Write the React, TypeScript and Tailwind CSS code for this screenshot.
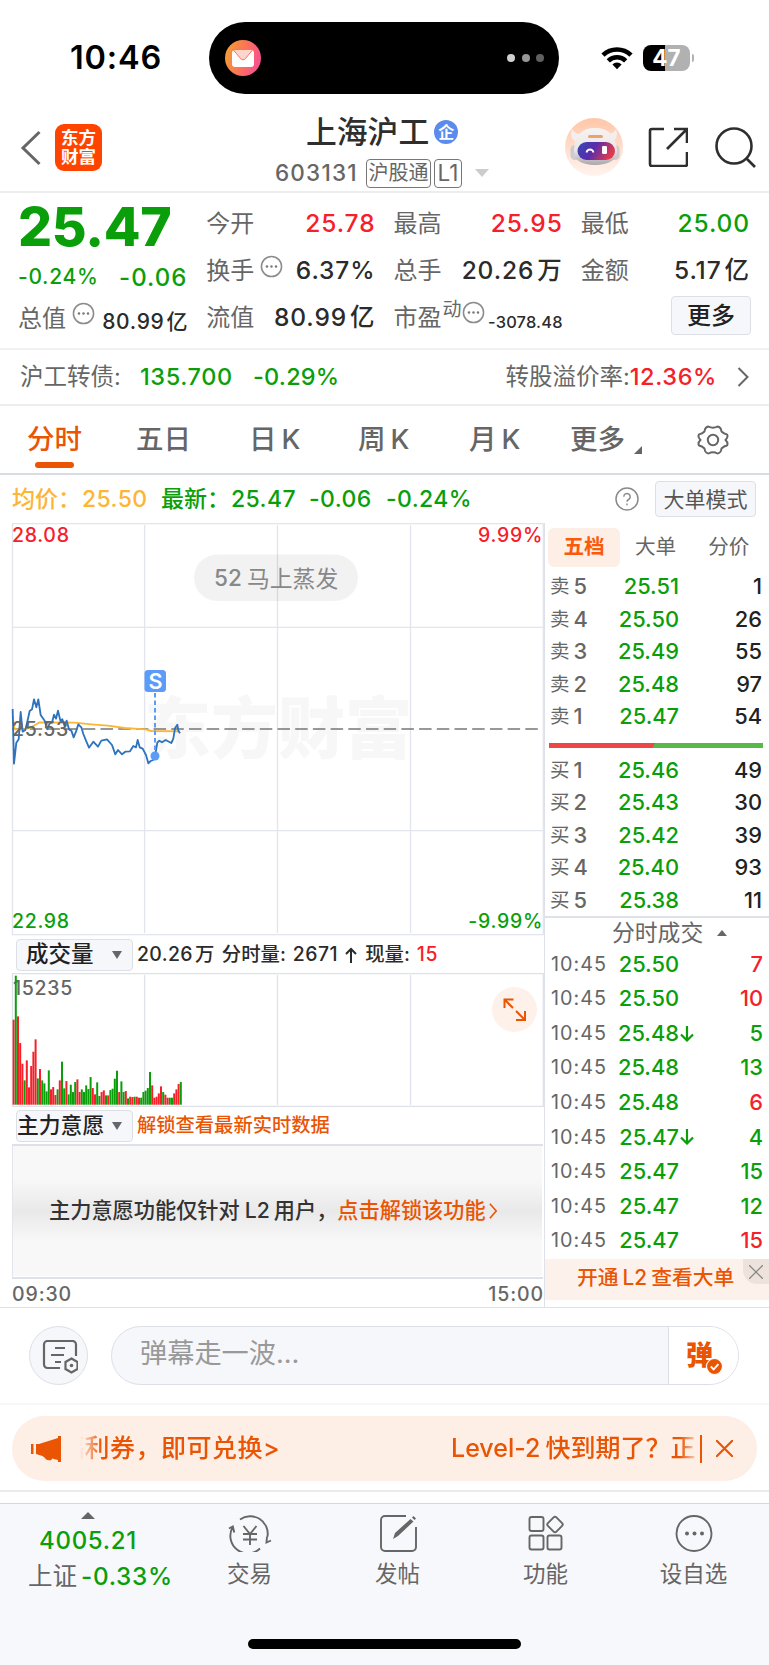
import type { ReactNode } from "react";
import clsx from "clsx";

const GREEN = "text-[#0a9f0a]";
const RED = "text-[#f5202a]";

const More = ({ className }: { className?: string }) => (
  <svg viewBox="0 0 24 24" className={clsx("size-[23px] shrink-0", className)} fill="none" stroke="#8c8c8c" strokeWidth="1.6">
    <circle cx="12" cy="12" r="10.5" />
    <g fill="#777" stroke="none">
      <circle cx="7.3" cy="12" r="1.3" />
      <circle cx="12" cy="12" r="1.3" />
      <circle cx="16.7" cy="12" r="1.3" />
    </g>
  </svg>
);

const StatusBar = () => (
  <div className="flex h-[100px] items-start pt-[22px] text-black">
    <div className="flex h-[72px] w-[209px] items-center pl-[70px] text-[32.500px] font-semibold tracking-[0.8px]">10:46</div>
    <div className="flex h-[72px] w-[350px] items-center justify-between rounded-full bg-black pl-[16px] pr-[15px]">
      <svg viewBox="0 0 36 36" className="size-[36px]">
        <defs>
          <linearGradient id="mail" x1="0" x2="1" y1="0" y2="0.3">
            <stop offset="0" stopColor="#f0a52e" />
            <stop offset="0.5" stopColor="#fb7a50" />
            <stop offset="1" stopColor="#f8548a" />
          </linearGradient>
        </defs>
        <circle cx="18" cy="18" r="18" fill="url(#mail)" />
        <rect x="7" y="10" width="22" height="17" rx="3" fill="#fff" />
        <path d="M8 9.500h20l-7.700 9.200a3 3 0 0 1-4.600 0z" fill="#fdd5cc" stroke="#f9765b" strokeWidth="1" />
      </svg>
      <div className="flex gap-[6.500px]">
        <span className="size-[8px] rounded-full bg-[#cfcfcf]" />
        <span className="size-[8px] rounded-full bg-[#979797]" />
        <span className="size-[8px] rounded-full bg-[#606060]" />
      </div>
    </div>
    <div className="flex h-[72px] items-center pl-[42px]">
      <svg viewBox="0 0 32 24" className="h-[24px] w-[32px]" fill="none" stroke="#000" strokeWidth="4.600">
        <path d="M2 9.200a20 20 0 0 1 28 0" />
        <path d="M7.300 14.800a12.600 12.600 0 0 1 17.400 0" />
        <path d="M16 23.200l-4.600-4.800a6.600 6.600 0 0 1 9.200 0z" fill="#000" stroke="none" />
      </svg>
      <div className="ml-[10px] flex h-[26px] w-[47px] items-center justify-center rounded-[8px] bg-linear-to-r from-black from-46% to-[#b1b1b1] to-46% text-[22.500px] font-bold text-white">
        47
      </div>
      <div className="ml-[2px] h-[8px] w-[2px] rounded-r-full bg-[#b1b1b1]" />
    </div>
  </div>
);

const Robot = () => (
  <svg viewBox="0 0 58 58" className="size-[58px]">
    <defs>
      <linearGradient id="halo" x1="0" x2="0" y1="0" y2="1">
        <stop offset="0" stopColor="#ffc6a8" />
        <stop offset="1" stopColor="#fff4ef" />
      </linearGradient>
      <linearGradient id="visor" x1="0" x2="1" y1="0" y2="0.3">
        <stop offset="0" stopColor="#3548b8" />
        <stop offset="0.5" stopColor="#5a2cab" />
        <stop offset="1" stopColor="#e03a50" />
      </linearGradient>
      <linearGradient id="shell" x1="0" x2="0" y1="0" y2="1">
        <stop offset="0" stopColor="#f7f3f2" />
        <stop offset="0.6" stopColor="#ebe7e8" />
        <stop offset="1" stopColor="#aaa5ab" />
      </linearGradient>
    </defs>
    <circle cx="29" cy="29" r="29" fill="url(#halo)" />
    <path d="M7 11c-3 8 1 13 7 13l6-9c-7 2-11 0-13-4zM51 11c3 8-1 13-7 13l-6-9c7 2 11 0 13-4z" fill="#f5eeec" />
    <rect x="5.500" y="27" width="9" height="15" rx="4.500" fill="#cfcace" />
    <rect x="45.500" y="27" width="9" height="15" rx="4.500" fill="#cfcace" />
    <path d="M9 34c0-17 8-24 21-24s21 7 22 24c0 8-9 13-22 13S9 42 9 34z" fill="url(#shell)" />
    <rect x="23" y="17" width="15" height="3" rx="1.500" fill="#e9a46d" />
    <rect x="12.500" y="24" width="37.500" height="18" rx="9" fill="url(#visor)" />
    <path d="M21.500 34.500c1-4 6-4 7 0" fill="none" stroke="#fff" strokeWidth="1.800" />
    <rect x="37" y="28" width="5" height="8" rx="1.200" fill="#fff" />
  </svg>
);

const Header = () => (
  <div className="flex h-[93px] items-center border-b-2 border-[#ededed] pl-[20px]">
    <svg viewBox="0 0 22 36" className="mt-[4px] h-[36px] w-[22px]" fill="none" stroke="#666" strokeWidth="3">
      <path d="M19.500 2L3 18l16.500 16" />
    </svg>
    <div className="ml-[13px] mt-[3px] flex size-[47px] flex-col items-center justify-center rounded-[9px] bg-[#ff4400] text-[17.500px] font-bold leading-[19.500px] text-white">
      <span>东方</span>
      <span>财富</span>
    </div>
    <div className="ml-[173px] w-[216px] pt-[13px]">
      <div className="flex h-[36px] items-center pl-[31px] text-[30.800px] font-medium text-[#2e2e2e]">
        上海沪工
        <span className="ml-[5px] flex size-[24px] items-center justify-center rounded-full bg-[#5b8bec] text-[16px] font-bold text-white">企</span>
      </div>
      <div className="mt-[6px] flex h-[34px] items-center text-[22.500px] text-[#666]">
        <span className="w-[91px] font-medium tracking-[1.200px]">603131</span>
        <span className="flex h-[29px] w-[65px] items-center justify-center rounded-[4px] border-[1.500px] border-[#777] text-[20px]">沪股通</span>
        <span className="ml-[3px] flex h-[29px] w-[28px] items-center justify-center rounded-[4px] border-[1.500px] border-[#777]">L1</span>
        <svg viewBox="0 0 14 8" className="ml-[13px] h-[8px] w-[14px]" fill="#ccc">
          <path d="M0 0h14l-7 8z" />
        </svg>
      </div>
    </div>
    <div className="ml-[74px] mt-[3px]">
      <Robot />
    </div>
    <svg viewBox="0 0 40 40" className="ml-[25px] mt-[2px] size-[40px]" fill="none" stroke="#2e2e2e" strokeWidth="2.600">
      <path d="M16 2H4a2 2 0 0 0-2 2v33a2 2 0 0 0 2 2h33a2 2 0 0 0 2-2V25M26 2h13v14M38.500 2.500L19 22" />
    </svg>
    <svg viewBox="0 0 42 42" className="ml-[27px] mt-[2px] size-[42px]" fill="none" stroke="#2e2e2e" strokeWidth="2.600">
      <circle cx="19" cy="20" r="17.500" />
      <path d="M31 32l9 9" />
    </svg>
  </div>
);

type StatProps = { label: string; value: string; unit?: string; color?: string; more?: boolean };

const Stat = ({ label, value, unit, color = "text-[#2b2b2b]", more }: StatProps) => (
  <div className="flex h-[47px] items-center text-[24px]">
    <span className="text-[#666]">{label}</span>
    {more && <More className="mb-[9px] ml-[6px]" />}
    <span className={clsx("-mr-px ml-auto text-[24.500px] font-medium tracking-[0.900px]", color)}>
      {value}
      {unit && <span className="ml-[3px]">{unit}</span>}
    </span>
  </div>
);

const Quote = () => (
  <div className="grid h-[157px] grid-cols-4 gap-[19px] border-b-2 border-[#f1f1f1] pl-[19px] pr-[20px] pt-[7px]">
    <div>
      <div className={clsx("-ml-px flex h-[54px] items-center text-[53.500px] font-extrabold tracking-[-0.300px]", GREEN)}>25.47</div>
      <div className={clsx("-ml-px flex h-[46px] items-center justify-between font-medium", GREEN)}>
        <span className="mb-[2px] text-[21px] tracking-[0.700px]">-0.24%</span>
        <span className="mt-[2px] text-[24px] tracking-[1px]">-0.06</span>
      </div>
      <div className="flex h-[42px] items-center whitespace-nowrap text-[#2b2b2b]">
        <span className="-ml-px mb-[5px] text-[24px] text-[#666]">总值</span>
        <More className="mb-[16px] ml-[6px]" />
        <span className="-mr-px ml-auto text-[21px] font-medium tracking-[0.700px]">80.99<span className="ml-[2px]">亿</span></span>
      </div>
    </div>
    <div>
      <Stat label="今开" value="25.78" color={RED} />
      <Stat label="换手" value="6.37%" more />
      <Stat label="流值" value="80.99" unit="亿" />
    </div>
    <div>
      <Stat label="最高" value="25.95" color={RED} />
      <Stat label="总手" value="20.26" unit="万" />
      <div className="flex h-[47px] items-center text-[24px] text-[#666]">
        市盈
        <span className="mb-[16px] ml-[1px] text-[19px]">动</span>
        <More className="mb-[10px]" />
        <span className="-mr-px ml-auto mt-[10px] text-[16.400px] font-medium tracking-[0.200px] text-[#2b2b2b]">-3078.48</span>
      </div>
    </div>
    <div>
      <Stat label="最低" value="25.00" color={GREEN} />
      <Stat label="金额" value="5.17" unit="亿" />
      <div className="-mr-[2px] ml-auto mt-[2px] flex h-[39px] w-[80px] items-center justify-center rounded-[4px] border-[1.500px] border-[#dcdfe6] bg-[#f6f7fa] text-[24px] font-medium text-[#222]">
        更多
      </div>
    </div>
  </div>
);

const BondRow = () => (
  <div className="flex h-[56px] items-center border-b-2 border-[#ededed] px-[20px] text-[23.500px] text-[#666]">
    <span className="w-[120px]">沪工转债:</span>
    <span className={clsx("w-[113px] font-medium tracking-[0.600px]", GREEN)}>135.700</span>
    <span className={clsx("font-medium tracking-[0.200px]", GREEN)}>-0.29%</span>
    <span className="ml-auto">转股溢价率:</span>
    <span className={clsx("font-medium tracking-[0.600px]", RED)}>12.36%</span>
    <svg viewBox="0 0 12 20" className="ml-[20px] h-[20px] w-[12px]" fill="none" stroke="#666" strokeWidth="2">
      <path d="M1.500 1L10.500 10l-9 9" />
    </svg>
  </div>
);

const Tabs = () => (
  <div className="flex h-[69px] items-center border-b-2 border-[#d8dde5] text-[27.500px] font-medium text-[#666]">
    <div className="relative ml-[27px] w-[109px] text-[#ea5504]">
      分时
      <span className="absolute left-[8px] top-[36px] h-[6px] w-[39px] rounded-full bg-[#ea5504]" />
    </div>
    <div className="w-[113px]">五日</div>
    <div className="w-[109px]">日<span className="ml-[5px]">K</span></div>
    <div className="w-[111px]">周<span className="ml-[5px]">K</span></div>
    <div className="w-[101px]">月<span className="ml-[5px]">K</span></div>
    <div>更多</div>
    <svg viewBox="0 0 8 8" className="ml-[9px] mt-[20px] size-[8px]" fill="#666">
      <path d="M8 0v8H0z" />
    </svg>
    <svg viewBox="0 0 32 32" className="ml-[55px] size-[32px]" fill="none" stroke="#666" strokeWidth="2" strokeLinejoin="round">
      <path d="M11.500 2.500Q16 5 20.500 2.500Q24 3 24.500 7.500Q27 10 30 10.500Q31.500 13 28.500 16Q31.500 19 30 21.500Q27 22 24.500 24.500Q24 29 20.500 29.500Q16 27 11.500 29.500Q8 29 7.500 24.500Q5 22 2 21.500Q.5 19 3.500 16Q.5 13 2 10.500Q5 10 7.500 7.500Q8 3 11.500 2.500z" />
      <circle cx="16" cy="16" r="5.200" />
    </svg>
  </div>
);

const InfoRow = () => (
  <div className="flex h-[48px] items-center whitespace-nowrap pl-[12px] pr-[13px] text-[23px] font-medium tracking-[0.400px]">
    <span className="w-[70px] tracking-normal text-[#fdb535]">均价：</span>
    <span className="w-[79px] text-[#fdb535]">25.50</span>
    <span className={clsx("w-[70px] tracking-normal", GREEN)}>最新：</span>
    <span className={clsx("w-[78px]", GREEN)}>25.47</span>
    <span className={clsx("w-[77px]", GREEN)}>-0.06</span>
    <span className={GREEN}>-0.24%</span>
    <svg viewBox="0 0 24 24" className="ml-auto size-[24px]" fill="none" stroke="#8a8a8a" strokeWidth="1.500">
      <circle cx="12" cy="12" r="11" />
      <path d="M8.800 9.700a3.200 3.200 0 1 1 4.800 2.800c-1.200.7-1.600 1.200-1.600 2.300M12 16.500v1.700" />
    </svg>
    <span className="ml-[16px] flex h-[36px] w-[101px] items-center justify-center rounded-[4px] border-[1.500px] border-[#dcdfe6] bg-[#f6f7fa] text-[21px] font-normal tracking-normal text-[#555]">
      大单模式
    </span>
  </div>
);

const PRICE =
  "14,57 18,221 25,158 32,148 38,66 44,125 52,120 58,95 65,63 72,58 78,28 85,52 91,28 98,75 110,92 118,118 125,100 132,98 138,74 144,86 150,62 157,92 163,88 170,108 176,92 183,118 190,122 197,142 204,125 211,103 220,112 226,132 234,152 243,173 256,155 270,170 280,152 297,148 312,165 322,193 330,180 342,193 352,185 366,184 376,168 384,172 389,150 395,172 404,176 414,195 421,220 428,213 436,210 441,198 448,158 454,152 462,157 473,150 490,159 496,146 501,115 508,104 511,122 516,130";
const AVERAGE = "14,80 20,118 45,118 70,112 95,97 200,98 250,103 300,107 350,114 412,118 430,123 515,124";

const PriceChart = () => (
  <svg viewBox="0 523 544 413" className="block h-[413px] w-[544px] text-[19.500px] font-medium tracking-[0.700px]">
    <text x="278" y="753" textAnchor="middle" className="fill-[#f7f7f7] text-[67px] font-black tracking-normal">东方财富</text>
    <g stroke="#e2e4ee" strokeWidth="1.300" fill="none">
      <path d="M12.500 523v412M144.600 525v408M277.500 525v408M410.500 525v408M543.300 523v412M12 523.700h531M12 627.300h531M12 830.700h531M12 934.700h531" />
    </g>
    <path d="M12 729h531" stroke="#777" strokeWidth="1.500" strokeDasharray="12.500 5.200" />
    <rect x="194" y="554.500" width="164" height="46.500" rx="23" fill="#000" fillOpacity="0.05" />
    <text x="214" y="586" className="fill-[#888] text-[22.500px] tracking-normal">52</text>
    <text x="247" y="586.500" className="fill-[#888] text-[22.800px] font-normal tracking-normal">马上蒸发</text>
    <g transform="translate(8 690) scale(0.33333)" fill="none" strokeLinejoin="round">
      <polyline points={AVERAGE} stroke="#fdb535" strokeWidth="5.500" />
      <polyline points={PRICE} stroke="#2e73bd" strokeWidth="5.500" />
    </g>
    <text x="12" y="735.500" className="fill-[#666]">25.53</text>
    <path d="M155 693v62" stroke="#5a9cf8" strokeWidth="2" strokeDasharray="4.500 3" />
    <circle cx="155" cy="756" r="4.500" fill="#5a9cf8" />
    <rect x="144.500" y="670" width="21.500" height="22" rx="3.500" fill="#5a9cf8" />
    <text x="155.500" y="688.500" textAnchor="middle" className="fill-white text-[21.500px] font-semibold tracking-normal">S</text>
    <text x="12" y="542" className="fill-[#f5202a]">28.08</text>
    <text x="543" y="542" textAnchor="end" className="fill-[#f5202a]">9.99%</text>
    <text x="12" y="927.700" className="fill-[#0a9f0a]">22.98</text>
    <text x="543" y="927.700" textAnchor="end" className="fill-[#0a9f0a]">-9.99%</text>
  </svg>
);

// one entry per minute: u = up (red), d = down (green), then the height
const VOLUME =
  "u255 d387 u265 u185 u123 d73 u133 u52 u116 u159 u196 d79 u107 d73 d64 d40 d103 u46 u53 u29 d46 u73 d129 d49 u71 d31 d60 d38 d68 u76 u38 d46 d38 d58 d47 d83 u50 u31 d67 d26 u38 u43 d28 u28 d44 d48 d78 d102 u38 d70 d38 u41 d19 u24 u23 d24 u24 u21 d21 d38 d42 d50 d98 u58 u21 u24 u34 u55 d38 u30 u21 d21 d21 u34 u46 u62 d68".split(" ");

const VolumeChart = () => (
  <svg viewBox="0 973 544 134" className="block h-[134px] w-[544px]">
    <path
      d="M12.500 973v134M144.600 975v130M277.500 975v130M410.500 975v130M543.300 973v134M12 973.500h531M12 1106.500h531"
      stroke="#dfe1ea"
      strokeWidth="1.300"
    />
    <text x="13" y="994.700" className="fill-[#666] text-[19.500px] font-medium tracking-[0.700px]">15235</text>
    {VOLUME.map((v, i) => {
      const h = Number(v.slice(1)) / 3;
      return <rect key={i} x={12.6 + i * 2.2} y={1104.7 - h} width="2" height={h} fill={v[0] === "u" ? "#f5202a" : "#0a9f0a"} />;
    })}
    <circle cx="514.500" cy="1009.500" r="22.500" fill="#fdf1ea" />
    <path d="M504.500 1008v-8.500h9M505 1000l8 8M516 1020h9v-9M524.500 1019.500l-8.500-8.500" fill="none" stroke="#ea5504" strokeWidth="2" />
  </svg>
);

const Picker = ({ label, className }: { label: string; className: string }) => (
  <div className={clsx("flex h-[32px] w-[117px] shrink-0 items-center justify-between rounded-[4px] border-[1.500px] border-[#dcdfe6] bg-[#f6f7fa] pr-[10px] text-[#222]", className)}>
    {label}
    <svg viewBox="0 0 10 8" className="h-[8px] w-[10px]" fill="#666">
      <path d="M0 0h10L5 8z" />
    </svg>
  </div>
);

const Charts = () => (
  <div className="w-[544px] shrink-0">
    <PriceChart />
    <div className="flex h-[37px] items-center whitespace-nowrap pl-[16px] text-[19.400px] font-medium text-[#2b2b2b]">
      <Picker label="成交量" className="pl-[9px] text-[22.500px]" />
      <span className="ml-[4px] tracking-[0.400px]">20.26<span className="ml-[2px]">万</span></span>
      <span className="ml-[7px]">分时量:</span>
      <span className="ml-[7px] tracking-[0.500px]">2671</span>
      <svg viewBox="0 0 12 16" className="ml-[7px] h-[16px] w-[12px]" fill="none" stroke="#2b2b2b" strokeWidth="2">
        <path d="M6 16V2M1 7l5-5 5 5" />
      </svg>
      <span className="ml-[8px]">现量:</span>
      <span className={clsx("ml-[7px] tracking-[0.700px]", RED)}>15</span>
    </div>
    <VolumeChart />
    <div className="flex h-[37px] items-center pl-[16px] text-[19.300px] font-medium text-[#ea5504]">
      <Picker label="主力意愿" className="text-[21.800px]" />
      <span className="ml-[4px] mt-[1px]">解锁查看最新实时数据</span>
    </div>
    <div className="ml-[12px] h-[135px] w-[531px] border-y-2 border-l border-b-[#dfe1ea] border-l-[#e2e4ee] border-t-[#dfe1ea]">
      <div className="flex h-[130px] w-[529px] items-center whitespace-nowrap bg-linear-to-b from-[#f8f8f8] from-25% via-[#e9e9e9] via-50% to-[#f8f8f8] to-74% pl-[36px] text-[21.200px] font-medium text-[#333]">
        主力意愿功能仅针对<span className="ml-[5px] mr-[4px]">L2</span>用户，
        <span className="text-[#ea5504]">点击解锁该功能</span>
        <svg viewBox="0 0 10 18" className="ml-[3px] h-[18px] w-[9px]" fill="none" stroke="#ea5504" strokeWidth="1.800">
          <path d="M1 1l7 8-7 8" />
        </svg>
      </div>
    </div>
    <div className="flex h-[28px] items-center justify-between pl-[12px] pt-[3px] text-[19.500px] font-medium tracking-[0.900px] text-[#666]">
      <span>09:30</span>
      <span>15:00</span>
    </div>
  </div>
);

const SELLS = [["5", "25.51", "1"], ["4", "25.50", "26"], ["3", "25.49", "55"], ["2", "25.48", "97"], ["1", "25.47", "54"]];
const BUYS = [["1", "25.46", "49"], ["2", "25.43", "30"], ["3", "25.42", "39"], ["4", "25.40", "93"], ["5", "25.38", "11"]];

const Level = ({ side, row }: { side: string; row: string[] }) => (
  <div className="flex h-[32.500px] items-center pl-[5px] pr-[7px] text-[21.800px] font-medium">
    <span className="flex w-[44px] items-center gap-[4px] text-[#666]">
      <span className="text-[19.500px] font-normal">{side}</span>
      {row[0]}
    </span>
    <span className={clsx("w-[85px] text-right", GREEN)}>{row[1]}</span>
    <span className="ml-auto text-[#222]">{row[2]}</span>
  </div>
);

const TRADES = [
  { price: "25.50", qty: "7", up: true },
  { price: "25.50", qty: "10", up: true },
  { price: "25.48", qty: "5", arrow: true },
  { price: "25.48", qty: "13" },
  { price: "25.48", qty: "6", up: true },
  { price: "25.47", qty: "4", arrow: true },
  { price: "25.47", qty: "15" },
  { price: "25.47", qty: "12" },
  { price: "25.47", qty: "15", up: true },
];

const OrderBook = () => (
  <div className="w-[225px] border-l border-[#dfe1ea]">
    <div className="flex h-[48px] items-center pl-[3px] text-[20.600px] text-[#666]">
      <span className="flex h-[39px] w-[72px] items-center justify-center rounded-[6px] bg-[#fdeee6] font-semibold text-[#fb5a0b]">五档</span>
      <span className="ml-[15px]">大单</span>
      <span className="ml-[32px]">分价</span>
    </div>
    {SELLS.map((row) => <Level key={row[0]} side="卖" row={row} />)}
    <div className="mb-[7px] ml-[4px] mr-[6px] mt-[9px] flex h-[5px] bg-linear-120 from-[#ec4646] from-49% to-[#58b947] to-49%" />
    {BUYS.map((row) => <Level key={row[0]} side="买" row={row} />)}
    <div className="-mt-px flex h-[31.500px] items-center border-t-2 border-[#dfe1ea] pl-[67px] pt-px text-[22.800px] text-[#666]">
      分时成交
      <svg viewBox="0 0 10 6" className="ml-[14px] h-[6px] w-[10px]" fill="#666">
        <path d="M0 6h10L5 0z" />
      </svg>
    </div>
    {TRADES.map((t, i) => (
      <div key={i} className="flex h-[34.540px] items-center pl-[6px] pr-[6px] text-[21.800px] font-medium">
        <span className="w-[67px] text-[19.800px] font-normal tracking-[1px] text-[#666]">10:45</span>
        <span className={clsx("w-[61px] text-right", GREEN)}>{t.price}</span>
        {t.arrow && (
          <svg viewBox="0 0 14 16" className="ml-[1px] h-[16px] w-[14px]" fill="none" stroke="#0a9f0a" strokeWidth="2.200">
            <path d="M7 0v14M1 8.500l6 6 6-6" />
          </svg>
        )}
        <span className={clsx("ml-auto", t.up ? RED : GREEN)}>{t.qty}</span>
      </div>
    ))}
    <div className="relative mt-[1px] flex h-[41px] items-center bg-[#fdf1eb] pb-[3px] pl-[32px] text-[20.800px] font-medium text-[#ea5504]">
      开通<span className="mx-[4px]">L2</span>查看大单
      <span className="absolute right-0 top-0 flex h-[25px] w-[26px] items-center justify-center rounded-bl-[14px] bg-[#eee2dc]">
        <svg viewBox="0 0 14 14" className="size-[14px]" stroke="#888" strokeWidth="1.300">
          <path d="M0 0l14 14M14 0L0 14" />
        </svg>
      </span>
    </div>
  </div>
);

const InputRow = () => (
  <div className="flex h-[98px] items-center border-b-2 border-t-[1.500px] border-b-[#f7f7f7] border-t-[#dfe1e6] pl-[29px] pr-[30px]">
    <div className="flex size-[59px] items-center justify-center rounded-full border-[1.500px] border-[#dcdfe6] bg-[#f6f7fa]">
      <svg viewBox="0 0 36 34" className="ml-[3px] mt-[3px] h-[34px] w-[36px]" fill="none" stroke="#666" strokeWidth="2.200">
        <path d="M18 28H5.500A3.500 3.500 0 0 1 2 24.500v-20A3.500 3.500 0 0 1 5.500 1h25A3.500 3.500 0 0 1 34 4.500V16M13 8h10M9 15h13M13 22h6" />
        <path d="M29.500 18.500l6 3.500v7l-6 3.500-6-3.500v-7z" />
        <circle cx="29.500" cy="25.500" r="1.800" fill="#666" stroke="none" />
      </svg>
    </div>
    <div className="ml-[23px] flex h-[59px] flex-1 overflow-hidden rounded-full border-[1.500px] border-[#dcdfe6] bg-[#f6f7fa]">
      <div className="flex flex-1 items-center pb-[3px] pl-[28px] text-[27.200px] text-[#999]">弹幕走一波...</div>
      <div className="relative flex w-[70px] items-center border-l-[1.500px] border-[#dcdfe6] bg-white pl-[17px] text-[27px] font-black text-[#ea5504]">
        弹
        <svg viewBox="0 0 16 16" className="absolute left-[37px] top-[31px] size-[17px]">
          <circle cx="8" cy="8" r="7.500" fill="#ea5504" stroke="#fff" />
          <path d="M4.500 8l2.700 2.700 4.500-5" fill="none" stroke="#fff" strokeWidth="1.800" />
        </svg>
      </div>
    </div>
  </div>
);

const Notice = () => (
  <div className="h-[87px] border-b-2 border-[#ebebeb] px-[12px] pt-[11px]">
    <div className="flex h-[65px] items-center whitespace-nowrap rounded-full bg-[#fdeee6] pl-[19px] text-[25px] font-medium text-[#ea5504]">
      <svg viewBox="0 0 30 26" className="h-[26px] w-[30px]" fill="#ea5504">
        <path d="M0 8h2.500v10H0zM5 8h3L27 2V0h3v26h-3v-2l-6-1.500c0 3-6 2-7-.5l-2.500-2L5 18z" />
      </svg>
      <span className="ml-[19px] flex h-[32px] w-[306px] items-center overflow-hidden mask-linear-90 mask-linear-from-transparent mask-linear-from-0% mask-linear-to-black mask-linear-to-7%">
        <span className="-ml-[21px] tracking-[0.500px]">福利券，即可兑换&gt;</span>
      </span>
      <span className="ml-[65px] flex w-[249px] mask-r-from-92% mask-r-to-100%">
        Level-2<span className="ml-[5px]">快到期了？</span>
        <span>正</span>
      </span>
      <span className="h-[28px] w-[2px] bg-[#ea5504]" />
      <svg viewBox="0 0 16 16" className="ml-[14px] size-[17px]" stroke="#ea5504" strokeWidth="2">
        <path d="M0 0l16 16M16 0L0 16" />
      </svg>
    </div>
  </div>
);

const NavItem = ({ label, children, className }: { label: string; children: ReactNode; className: string }) => (
  <div className={clsx("flex flex-col items-center text-[22.500px] text-[#666]", className)}>
    <svg viewBox="0 0 44 40" className="h-[40px] w-[44px]" fill="none" stroke="#666" strokeWidth="1.900">
      {children}
    </svg>
    <span className="mt-[11px]">{label}</span>
  </div>
);

const BottomNav = () => (
  <div className="mt-[11px] h-[162px] border-t-[1.500px] border-[#d6d8dd] bg-[#f7f8fb]">
    <div className="flex h-[135px] pt-[8px]">
      <div className="flex w-[200px] flex-col items-start pl-[28px]">
        <svg viewBox="0 0 14 7" className="ml-[53px] h-[7px] w-[14px]" fill="#666">
          <path d="M0 7h14L7 0z" />
        </svg>
        <span className={clsx("ml-[11px] mt-[10px] text-[24px] font-medium tracking-[0.700px]", GREEN)}>4005.21</span>
        <span className="mt-[11px] flex items-center text-[24.500px] text-[#666]">
          上证<span className={clsx("ml-[4px] text-[24.300px] font-medium tracking-[0.700px]", GREEN)}>-0.33%</span>
        </span>
      </div>
      <NavItem label="交易" className="w-[99px]">
        <path d="M12 7.500A17.500 17.500 0 0 1 39.500 24.500M32 36.500A17.500 17.500 0 0 1 4.500 15.500M1 16.500l3.800-2 1.500 6M43 28.500l-4.500 2 .5-6" />
        <path d="M15.500 14l6.500 8 6.500-8M15 22h14M15 27.500h14M22 22v11" />
      </NavItem>
      <NavItem label="发帖" className="ml-[49px] w-[99px]">
        <path d="M30 4H9a4 4 0 0 0-4 4v27a4 4 0 0 0 4 4h27a4 4 0 0 0 4-4V15" />
        <path d="M17 27l2-6L34.500 7l3 2.500L22 24zM36 5.500l1.500-1.500 2.500 2.500-1.500 1.500z" fill="#666" stroke="none" />
      </NavItem>
      <NavItem label="功能" className="ml-[49px] w-[99px]">
        <rect x="5.500" y="5" width="14" height="14" rx="2" />
        <rect x="5.500" y="23.500" width="14" height="14" rx="2" />
        <rect x="23.500" y="23.500" width="14" height="14" rx="2" />
        <rect x="25" y="6.500" width="12" height="12" rx="2" transform="rotate(45 31 12.500)" />
      </NavItem>
      <NavItem label="设自选" className="ml-[49px] w-[99px]">
        <circle cx="22" cy="21.500" r="17.500" />
        <g fill="#666" stroke="none">
          <circle cx="15" cy="21.500" r="2" />
          <circle cx="22.500" cy="21.500" r="2" />
          <circle cx="30" cy="21.500" r="2" />
        </g>
      </NavItem>
    </div>
    <div className="ml-[248px] h-[10px] w-[273px] rounded-full bg-black" />
  </div>
);

const App = () => (
  <div className="h-[1665px] w-[769px] overflow-hidden bg-white font-[Inter,'Noto_Sans_CJK_SC',sans-serif] leading-none">
    <StatusBar />
    <Header />
    <Quote />
    <BondRow />
    <Tabs />
    <InfoRow />
    <div className="flex h-[784px]">
      <Charts />
      <OrderBook />
    </div>
    <InputRow />
    <Notice />
    <BottomNav />
  </div>
);

export default App;
